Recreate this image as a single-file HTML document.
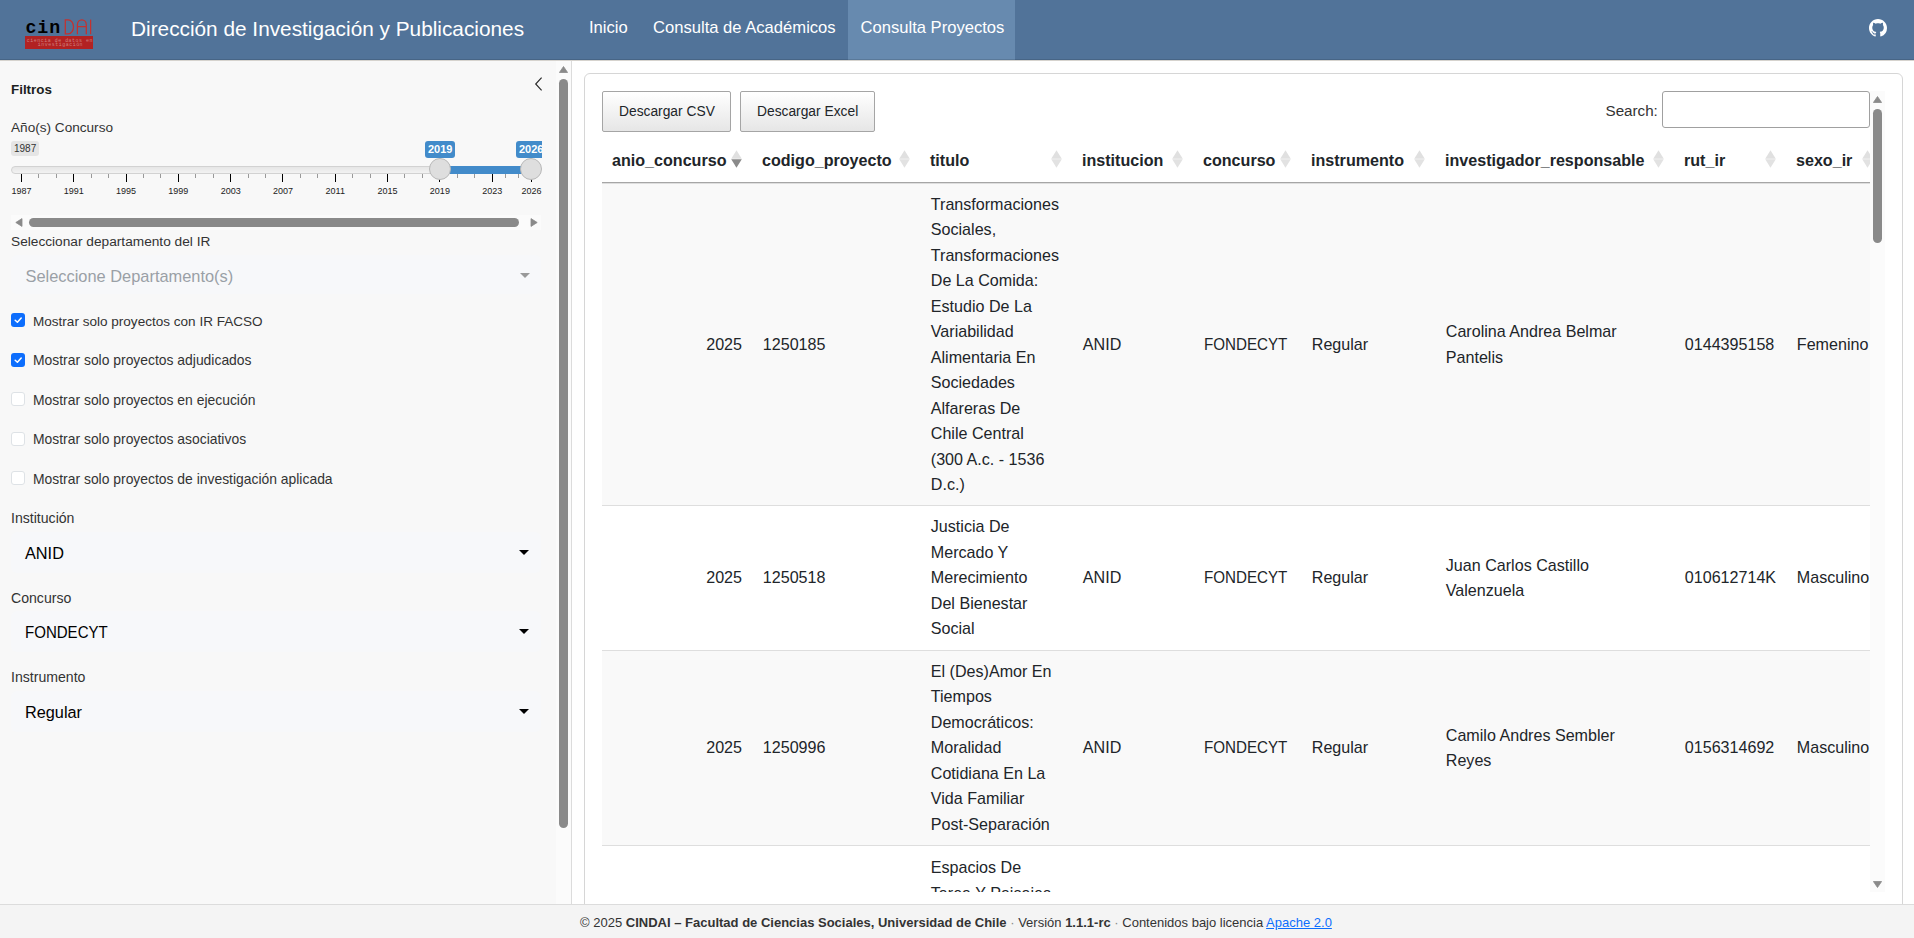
<!DOCTYPE html>
<html><head><meta charset="utf-8"><title>Consulta Proyectos</title><style>
*{box-sizing:border-box;margin:0;padding:0}
html,body{width:1914px;height:938px;overflow:hidden;background:#fff;font-family:"Liberation Sans",sans-serif;color:#212529}
.t{position:absolute;white-space:nowrap;line-height:1}
.a{position:absolute}
</style></head><body>
<div class="a" style="left:0;top:0;width:1914px;height:60px;background:#517399"></div>
<div class="a" style="left:848px;top:0;width:167px;height:60px;background:#678aaf"></div>
<div class="a" style="left:0;top:59px;width:1914px;height:1px;background:rgba(0,0,0,0.12)"></div>
<div class="a" style="left:0;top:60px;width:1914px;height:1px;background:#d6d3ce"></div>
<div class="a" style="left:25px;top:19px;width:69px;height:31px">
<div class="t" style="left:0.5px;top:0.4px;font-family:'Liberation Mono';font-weight:700;font-size:18.3px;color:#000;letter-spacing:0.9px">cin</div>
<svg class="a" style="left:38.8px;top:0px" width="30" height="16" viewBox="0 0 30 16"><g fill="none" stroke="#c5312f" stroke-width="1.25"><path d="M1.3 0.8 L1.3 14.9 L4.2 14.9 A5.3 7.05 0 0 0 4.2 0.8 Z"/><path d="M13.4 15.2 L13.4 5.8 A4.45 5 0 0 1 22.3 5.8 L22.3 15.2 M13.4 7.6 L22.3 7.6"/><path d="M26.6 0.6 L26.6 15.2"/></g></svg>
<div class="a" style="left:0;top:17px;width:68px;height:13px;background:#b22222"></div>
<div class="t" style="left:1.8px;top:19.5px;font-family:'Liberation Mono';font-size:4.9px;color:#cf8080;letter-spacing:0.55px">ciencia de datos en</div>
<div class="t" style="left:12.8px;top:24px;font-family:'Liberation Mono';font-size:4.9px;color:#cf8080;letter-spacing:0.55px">investigación</div>
</div>
<div class="t" style="left:131.00px;top:18.89px;font-size:20.8px;font-weight:400;color:#fff;">Dirección de Investigación y Publicaciones</div>
<div class="t" style="left:589.00px;top:20.35px;font-size:16.6px;font-weight:400;color:#fff;">Inicio</div>
<div class="t" style="left:653.00px;top:20.35px;font-size:16.6px;font-weight:400;color:#fff;">Consulta de Académicos</div>
<div class="t" style="left:860.50px;top:20.35px;font-size:16.6px;font-weight:400;color:#fff;">Consulta Proyectos</div>
<svg class="a" style="left:1869px;top:18.5px" width="18" height="18" viewBox="0 0 16 16"><path fill="#fff" d="M8 0C3.58 0 0 3.58 0 8c0 3.54 2.29 6.53 5.47 7.59.4.07.55-.17.55-.38 0-.19-.01-.82-.01-1.49-2.01.37-2.530-.49-2.69-.94-.09-.23-.48-.94-.82-1.13-.28-.15-.68-.52-.01-.53.63-.01 1.08.58 1.23.82.72 1.21 1.87.87 2.33.66.07-.52.28-.87.51-1.07-1.78-.2-3.64-.89-3.64-3.950 0-.87.31-1.59.82-2.15-.08-.2-.36-1.02.08-2.12 0 0 .67-.21 2.2.82.64-.18 1.32-.27 2-.27.68 0 1.36.09 2 .27 1.53-1.04 2.2-.82 2.2-.82.44 1.1.16 1.92.08 2.12.51.56.82 1.27.82 2.15 0 3.07-1.87 3.75-3.65 3.95.29.25.54.73.54 1.48 0 1.07-.01 1.93-.01 2.2 0 .21.15.46.55.38A8.013 8.013 0 0016 8c0-4.42-3.58-8-8-8z"/></svg>
<div class="a" style="left:0;top:61px;width:571px;height:877px;background:#f8f8f8"></div>
<div class="a" style="left:571px;top:61px;width:1px;height:877px;background:#dcdcdc"></div>
<div class="a" style="left:556px;top:61px;width:15px;height:877px;background:#fbfbfb"></div>
<svg class="a" style="left:559px;top:66px" width="9" height="7" viewBox="0 0 9 7"><path d="M4.5 0.5 L8.6 6.5 L0.4 6.5 Z" fill="#8a8a8a" stroke="#8a8a8a" stroke-width="0.8" stroke-linejoin="round"/></svg>
<div class="a" style="left:559px;top:79px;width:9px;height:749px;background:#8a8a8a;border-radius:4.5px"></div>
<svg class="a" style="left:533px;top:76px" width="10" height="16" viewBox="0 0 10 16"><path d="M8.6 1.6 L2.7 8 L8.6 14.4" fill="none" stroke="#2a2a2a" stroke-width="1.15"/></svg>
<div class="t" style="left:11.00px;top:82.66px;font-size:13.4px;font-weight:700;color:#1d1f21;">Filtros</div>
<div class="t" style="left:11.00px;top:120.79px;font-size:13.6px;font-weight:400;color:#333;">Año(s) Concurso</div>
<div class="a" style="left:11px;top:141px;width:28px;height:15px;background:#e5e5e5;border-radius:3px"></div>
<div class="t" style="left:14.00px;top:144.03px;font-size:10px;font-weight:400;color:#333;">1987</div>
<div class="a" style="left:11px;top:166px;width:530px;height:8px;background:linear-gradient(#e6e6e6,#f2f2f2);border:1px solid #d2d2d2;border-radius:8px"></div>
<div class="a" style="left:440px;top:166px;width:91px;height:8px;background:#428bca"></div>
<div class="a" style="left:20.90px;top:174px;width:1px;height:8px;background:#000"></div>
<div class="t" style="left:11.40px;top:187.38px;width:20px;text-align:center;font-size:9px;color:#222">1987</div>
<div class="a" style="left:73.21px;top:174px;width:1px;height:8px;background:#000"></div>
<div class="t" style="left:63.71px;top:187.38px;width:20px;text-align:center;font-size:9px;color:#222">1991</div>
<div class="a" style="left:125.52px;top:174px;width:1px;height:8px;background:#000"></div>
<div class="t" style="left:116.02px;top:187.38px;width:20px;text-align:center;font-size:9px;color:#222">1995</div>
<div class="a" style="left:177.82px;top:174px;width:1px;height:8px;background:#000"></div>
<div class="t" style="left:168.32px;top:187.38px;width:20px;text-align:center;font-size:9px;color:#222">1999</div>
<div class="a" style="left:230.13px;top:174px;width:1px;height:8px;background:#000"></div>
<div class="t" style="left:220.63px;top:187.38px;width:20px;text-align:center;font-size:9px;color:#222">2003</div>
<div class="a" style="left:282.44px;top:174px;width:1px;height:8px;background:#000"></div>
<div class="t" style="left:272.94px;top:187.38px;width:20px;text-align:center;font-size:9px;color:#222">2007</div>
<div class="a" style="left:334.75px;top:174px;width:1px;height:8px;background:#000"></div>
<div class="t" style="left:325.25px;top:187.38px;width:20px;text-align:center;font-size:9px;color:#222">2011</div>
<div class="a" style="left:387.06px;top:174px;width:1px;height:8px;background:#000"></div>
<div class="t" style="left:377.56px;top:187.38px;width:20px;text-align:center;font-size:9px;color:#222">2015</div>
<div class="a" style="left:439.36px;top:174px;width:1px;height:8px;background:#000"></div>
<div class="t" style="left:429.86px;top:187.38px;width:20px;text-align:center;font-size:9px;color:#222">2019</div>
<div class="a" style="left:491.67px;top:174px;width:1px;height:8px;background:#000"></div>
<div class="t" style="left:482.17px;top:187.38px;width:20px;text-align:center;font-size:9px;color:#222">2023</div>
<div class="a" style="left:530.90px;top:174px;width:1px;height:8px;background:#000"></div>
<div class="t" style="left:521.40px;top:187.38px;width:20px;text-align:center;font-size:9px;color:#222">2026</div>
<div class="a" style="left:38.34px;top:174px;width:1px;height:4px;background:#999"></div>
<div class="a" style="left:55.77px;top:174px;width:1px;height:4px;background:#999"></div>
<div class="a" style="left:90.64px;top:174px;width:1px;height:4px;background:#999"></div>
<div class="a" style="left:108.08px;top:174px;width:1px;height:4px;background:#999"></div>
<div class="a" style="left:142.95px;top:174px;width:1px;height:4px;background:#999"></div>
<div class="a" style="left:160.39px;top:174px;width:1px;height:4px;background:#999"></div>
<div class="a" style="left:195.26px;top:174px;width:1px;height:4px;background:#999"></div>
<div class="a" style="left:212.70px;top:174px;width:1px;height:4px;background:#999"></div>
<div class="a" style="left:247.57px;top:174px;width:1px;height:4px;background:#999"></div>
<div class="a" style="left:265.00px;top:174px;width:1px;height:4px;background:#999"></div>
<div class="a" style="left:299.88px;top:174px;width:1px;height:4px;background:#999"></div>
<div class="a" style="left:317.31px;top:174px;width:1px;height:4px;background:#999"></div>
<div class="a" style="left:352.18px;top:174px;width:1px;height:4px;background:#999"></div>
<div class="a" style="left:369.62px;top:174px;width:1px;height:4px;background:#999"></div>
<div class="a" style="left:404.49px;top:174px;width:1px;height:4px;background:#999"></div>
<div class="a" style="left:421.93px;top:174px;width:1px;height:4px;background:#999"></div>
<div class="a" style="left:456.80px;top:174px;width:1px;height:4px;background:#999"></div>
<div class="a" style="left:474.24px;top:174px;width:1px;height:4px;background:#999"></div>
<div class="a" style="left:504.75px;top:174px;width:1px;height:4px;background:#999"></div>
<div class="a" style="left:517.83px;top:174px;width:1px;height:4px;background:#999"></div>
<div class="a" style="left:429px;top:158px;width:22px;height:22px;border-radius:50%;background:#dedede;border:1px solid #b8b8b8"></div>
<div class="a" style="left:520px;top:158px;width:22px;height:22px;border-radius:50%;background:#dedede;border:1px solid #b8b8b8"></div>
<div class="a" style="left:425px;top:141px;width:30px;height:17px;background:#428bca;border-radius:3px"></div>
<div class="t" style="left:428.00px;top:144.19px;font-size:11px;font-weight:700;color:#fff;">2019</div>
<div class="a" style="left:516px;top:141px;width:26px;height:17px;background:#428bca;border-radius:3px 0 0 3px;overflow:hidden"></div>
<div class="a" style="left:516px;top:141px;width:26px;height:17px;overflow:hidden"><div class="t" style="left:3px;top:3.19px;font-size:11px;font-weight:700;color:#fff">2026</div></div>
<div class="a" style="left:11px;top:215px;width:530px;height:15px;background:#fbfbfb"></div>
<svg class="a" style="left:15px;top:218px" width="8" height="9" viewBox="0 0 8 9"><path d="M7 0.6 L7 8.4 L0.8 4.5 Z" fill="#8a8a8a" stroke="#8a8a8a" stroke-width="0.8" stroke-linejoin="round"/></svg>
<svg class="a" style="left:530px;top:218px" width="8" height="9" viewBox="0 0 8 9"><path d="M1 0.6 L1 8.4 L7.2 4.5 Z" fill="#8a8a8a" stroke="#8a8a8a" stroke-width="0.8" stroke-linejoin="round"/></svg>
<div class="a" style="left:29px;top:218px;width:490px;height:9px;background:#8a8a8a;border-radius:4.5px"></div>
<div class="t" style="left:11.00px;top:234.90px;font-size:13.7px;font-weight:400;color:#333;">Seleccionar departamento del IR</div>
<div class="a" style="left:11px;top:255px;width:530px;height:39px;background:#f7f8fa;border-radius:6px"></div>
<div class="t" style="left:25.50px;top:267.92px;font-size:16.4px;font-weight:400;color:#9aa0a6;">Seleccione Departamento(s)</div>
<svg class="a" style="left:519.5px;top:273px" width="10" height="5" viewBox="0 0 10 5"><path d="M0 0 L10 0 L5 5 Z" fill="#999"/></svg>
<div class="a" style="left:11px;top:313px;width:14px;height:14px;background:#0d6efd;border-radius:3px"></div>
<svg class="a" style="left:11px;top:313px" width="14" height="14" viewBox="0 0 14 14"><path d="M4.2 7.3 L6.4 9.3 L10.2 5.1" fill="none" stroke="#fff" stroke-width="1.55" stroke-linecap="round" stroke-linejoin="round"/></svg>
<div class="t" style="left:33.00px;top:314.83px;font-size:13.55px;font-weight:400;color:#333;">Mostrar solo proyectos con IR FACSO</div>
<div class="a" style="left:11px;top:352.6px;width:14px;height:14px;background:#0d6efd;border-radius:3px"></div>
<svg class="a" style="left:11px;top:352.6px" width="14" height="14" viewBox="0 0 14 14"><path d="M4.2 7.3 L6.4 9.3 L10.2 5.1" fill="none" stroke="#fff" stroke-width="1.55" stroke-linecap="round" stroke-linejoin="round"/></svg>
<div class="t" style="left:33.00px;top:354.13px;font-size:13.9px;font-weight:400;color:#333;">Mostrar solo proyectos adjudicados</div>
<div class="a" style="left:11px;top:392.2px;width:14px;height:14px;background:#fff;border:1px solid #dee2e6;border-radius:3px"></div>
<div class="t" style="left:33.00px;top:393.73px;font-size:13.9px;font-weight:400;color:#333;">Mostrar solo proyectos en ejecución</div>
<div class="a" style="left:11px;top:431.8px;width:14px;height:14px;background:#fff;border:1px solid #dee2e6;border-radius:3px"></div>
<div class="t" style="left:33.00px;top:433.33px;font-size:13.9px;font-weight:400;color:#333;">Mostrar solo proyectos asociativos</div>
<div class="a" style="left:11px;top:471.4px;width:14px;height:14px;background:#fff;border:1px solid #dee2e6;border-radius:3px"></div>
<div class="t" style="left:33.00px;top:472.93px;font-size:13.9px;font-weight:400;color:#333;">Mostrar solo proyectos de investigación aplicada</div>
<div class="t" style="left:11.00px;top:511.46px;font-size:14.1px;font-weight:400;color:#333;">Institución</div>
<div class="a" style="left:11px;top:532px;width:530px;height:41px;background:#f7f8fa;border-radius:6px"></div>
<div class="t" style="left:25.00px;top:545.00px;font-size:16.3px;font-weight:400;color:#000;">ANID</div>
<svg class="a" style="left:519px;top:550px" width="10" height="5" viewBox="0 0 10 5"><path d="M0 0 L10 0 L5 5 Z" fill="#000"/></svg>
<div class="t" style="left:11.00px;top:591.06px;font-size:14.1px;font-weight:400;color:#333;">Concurso</div>
<div class="a" style="left:11px;top:611px;width:530px;height:41px;background:#f7f8fa;border-radius:6px"></div>
<div class="t" style="left:25.00px;top:623.80px;font-size:16.3px;font-weight:400;color:#000;transform:scaleX(0.924);transform-origin:left;">FONDECYT</div>
<svg class="a" style="left:519px;top:629px" width="10" height="5" viewBox="0 0 10 5"><path d="M0 0 L10 0 L5 5 Z" fill="#000"/></svg>
<div class="t" style="left:11.00px;top:670.06px;font-size:14.1px;font-weight:400;color:#333;">Instrumento</div>
<div class="a" style="left:11px;top:691px;width:530px;height:41px;background:#f7f8fa;border-radius:6px"></div>
<div class="t" style="left:25.00px;top:703.70px;font-size:16.3px;font-weight:400;color:#000;">Regular</div>
<svg class="a" style="left:519px;top:709px" width="10" height="5" viewBox="0 0 10 5"><path d="M0 0 L10 0 L5 5 Z" fill="#000"/></svg>
<div class="a" style="left:584px;top:73px;width:1319px;height:900px;border:1px solid #d6d6d6;border-radius:6px;background:#fff"></div>
<div class="a" style="left:602px;top:91px;width:129px;height:41px;border:1px solid #a5a5a5;border-radius:2px;background:linear-gradient(#fff,#e6e6e6)"></div>
<div class="t" style="left:619.00px;top:105.32px;font-size:13.8px;font-weight:400;color:#212529;">Descargar CSV</div>
<div class="a" style="left:740px;top:91px;width:135px;height:41px;border:1px solid #a5a5a5;border-radius:2px;background:linear-gradient(#fff,#e6e6e6)"></div>
<div class="t" style="left:757.00px;top:105.32px;font-size:13.8px;font-weight:400;color:#212529;">Descargar Excel</div>
<div class="t" style="left:1605.50px;top:103.43px;font-size:15.2px;font-weight:400;color:#333;">Search:</div>
<div class="a" style="left:1662px;top:91px;width:208px;height:37px;border:1px solid #a0a0a0;border-radius:3px;background:#fff"></div>
<div class="a" style="left:602px;top:91px;width:1268px;height:801px;overflow:hidden">
<div class="t" style="left:10.00px;top:60.77px;font-size:16.1px;font-weight:700;color:#212529;">anio_concurso</div>
<svg class="a" style="left:129px;top:58.80000000000001px" width="11" height="18" viewBox="0 0 11 18"><path d="M5.5 0.3 L10.8 8.7 L0.2 8.7 Z" fill="#e0e0e0"/><path d="M0.2 9.2 L10.8 9.2 L5.5 17.7 Z" fill="#8a8a8a"/></svg>
<div class="t" style="left:160.00px;top:60.77px;font-size:16.1px;font-weight:700;color:#212529;">codigo_proyecto</div>
<svg class="a" style="left:297px;top:58.80000000000001px" width="11" height="18" viewBox="0 0 11 18"><path d="M5.5 0.3 L10.8 8.7 L0.2 8.7 Z" fill="#e0e0e0"/><path d="M0.2 9.2 L10.8 9.2 L5.5 17.7 Z" fill="#e2e2e2"/></svg>
<div class="t" style="left:328.00px;top:60.77px;font-size:16.1px;font-weight:700;color:#212529;">titulo</div>
<svg class="a" style="left:449px;top:58.80000000000001px" width="11" height="18" viewBox="0 0 11 18"><path d="M5.5 0.3 L10.8 8.7 L0.2 8.7 Z" fill="#e0e0e0"/><path d="M0.2 9.2 L10.8 9.2 L5.5 17.7 Z" fill="#e2e2e2"/></svg>
<div class="t" style="left:480.00px;top:60.77px;font-size:16.1px;font-weight:700;color:#212529;">institucion</div>
<svg class="a" style="left:570px;top:58.80000000000001px" width="11" height="18" viewBox="0 0 11 18"><path d="M5.5 0.3 L10.8 8.7 L0.2 8.7 Z" fill="#e0e0e0"/><path d="M0.2 9.2 L10.8 9.2 L5.5 17.7 Z" fill="#e2e2e2"/></svg>
<div class="t" style="left:601.00px;top:60.77px;font-size:16.1px;font-weight:700;color:#212529;">concurso</div>
<svg class="a" style="left:678px;top:58.80000000000001px" width="11" height="18" viewBox="0 0 11 18"><path d="M5.5 0.3 L10.8 8.7 L0.2 8.7 Z" fill="#e0e0e0"/><path d="M0.2 9.2 L10.8 9.2 L5.5 17.7 Z" fill="#e2e2e2"/></svg>
<div class="t" style="left:709.00px;top:60.77px;font-size:16.1px;font-weight:700;color:#212529;">instrumento</div>
<svg class="a" style="left:812px;top:58.80000000000001px" width="11" height="18" viewBox="0 0 11 18"><path d="M5.5 0.3 L10.8 8.7 L0.2 8.7 Z" fill="#e0e0e0"/><path d="M0.2 9.2 L10.8 9.2 L5.5 17.7 Z" fill="#e2e2e2"/></svg>
<div class="t" style="left:843.00px;top:60.77px;font-size:16.1px;font-weight:700;color:#212529;">investigador_responsable</div>
<svg class="a" style="left:1051px;top:58.80000000000001px" width="11" height="18" viewBox="0 0 11 18"><path d="M5.5 0.3 L10.8 8.7 L0.2 8.7 Z" fill="#e0e0e0"/><path d="M0.2 9.2 L10.8 9.2 L5.5 17.7 Z" fill="#e2e2e2"/></svg>
<div class="t" style="left:1082.00px;top:60.77px;font-size:16.1px;font-weight:700;color:#212529;">rut_ir</div>
<svg class="a" style="left:1163px;top:58.80000000000001px" width="11" height="18" viewBox="0 0 11 18"><path d="M5.5 0.3 L10.8 8.7 L0.2 8.7 Z" fill="#e0e0e0"/><path d="M0.2 9.2 L10.8 9.2 L5.5 17.7 Z" fill="#e2e2e2"/></svg>
<div class="t" style="left:1194.00px;top:60.77px;font-size:16.1px;font-weight:700;color:#212529;">sexo_ir</div>
<svg class="a" style="left:1260px;top:58.80000000000001px" width="11" height="18" viewBox="0 0 11 18"><path d="M5.5 0.3 L10.8 8.7 L0.2 8.7 Z" fill="#e0e0e0"/><path d="M0.2 9.2 L10.8 9.2 L5.5 17.7 Z" fill="#e2e2e2"/></svg>
<div class="a" style="left:0;top:91px;width:1294px;height:1px;background:#a6a6a6"></div>
<div class="a" style="left:0;top:92px;width:1294px;height:322px;background:#f9f9f9;border-top:1px solid #dedede"></div>
<div class="t" style="left:0px;width:140px;text-align:right;top:244.87px;font-size:16.1px;color:#212529">2025</div>
<div class="t" style="left:160.80px;top:244.87px;font-size:16.1px;font-weight:400;color:#212529;">1250185</div>
<div class="t" style="left:328.80px;top:104.62px;font-size:16.1px;font-weight:400;color:#212529;">Transformaciones</div>
<div class="t" style="left:328.80px;top:130.12px;font-size:16.1px;font-weight:400;color:#212529;">Sociales,</div>
<div class="t" style="left:328.80px;top:155.62px;font-size:16.1px;font-weight:400;color:#212529;">Transformaciones</div>
<div class="t" style="left:328.80px;top:181.12px;font-size:16.1px;font-weight:400;color:#212529;">De La Comida:</div>
<div class="t" style="left:328.80px;top:206.62px;font-size:16.1px;font-weight:400;color:#212529;">Estudio De La</div>
<div class="t" style="left:328.80px;top:232.12px;font-size:16.1px;font-weight:400;color:#212529;">Variabilidad</div>
<div class="t" style="left:328.80px;top:257.62px;font-size:16.1px;font-weight:400;color:#212529;">Alimentaria En</div>
<div class="t" style="left:328.80px;top:283.12px;font-size:16.1px;font-weight:400;color:#212529;">Sociedades</div>
<div class="t" style="left:328.80px;top:308.62px;font-size:16.1px;font-weight:400;color:#212529;">Alfareras De</div>
<div class="t" style="left:328.80px;top:334.12px;font-size:16.1px;font-weight:400;color:#212529;">Chile Central</div>
<div class="t" style="left:328.80px;top:359.62px;font-size:16.1px;font-weight:400;color:#212529;">(300 A.c. - 1536</div>
<div class="t" style="left:328.80px;top:385.12px;font-size:16.1px;font-weight:400;color:#212529;">D.c.)</div>
<div class="t" style="left:480.80px;top:244.87px;font-size:16.1px;font-weight:400;color:#212529;">ANID</div>
<div class="t" style="left:601.80px;top:244.87px;font-size:16.1px;font-weight:400;color:#212529;transform:scaleX(0.942);transform-origin:left;">FONDECYT</div>
<div class="t" style="left:709.80px;top:244.87px;font-size:16.1px;font-weight:400;color:#212529;">Regular</div>
<div class="t" style="left:843.80px;top:232.12px;font-size:16.1px;font-weight:400;color:#212529;">Carolina Andrea Belmar</div>
<div class="t" style="left:843.80px;top:257.62px;font-size:16.1px;font-weight:400;color:#212529;">Pantelis</div>
<div class="t" style="left:1082.80px;top:244.87px;font-size:16.1px;font-weight:400;color:#212529;">0144395158</div>
<div class="t" style="left:1194.80px;top:244.87px;font-size:16.1px;font-weight:400;color:#212529;">Femenino</div>
<div class="a" style="left:0;top:414px;width:1294px;height:145px;background:#fff;border-top:1px solid #dedede"></div>
<div class="t" style="left:0px;width:140px;text-align:right;top:478.37px;font-size:16.1px;color:#212529">2025</div>
<div class="t" style="left:160.80px;top:478.37px;font-size:16.1px;font-weight:400;color:#212529;">1250518</div>
<div class="t" style="left:328.80px;top:427.37px;font-size:16.1px;font-weight:400;color:#212529;">Justicia De</div>
<div class="t" style="left:328.80px;top:452.87px;font-size:16.1px;font-weight:400;color:#212529;">Mercado Y</div>
<div class="t" style="left:328.80px;top:478.37px;font-size:16.1px;font-weight:400;color:#212529;">Merecimiento</div>
<div class="t" style="left:328.80px;top:503.87px;font-size:16.1px;font-weight:400;color:#212529;">Del Bienestar</div>
<div class="t" style="left:328.80px;top:529.37px;font-size:16.1px;font-weight:400;color:#212529;">Social</div>
<div class="t" style="left:480.80px;top:478.37px;font-size:16.1px;font-weight:400;color:#212529;">ANID</div>
<div class="t" style="left:601.80px;top:478.37px;font-size:16.1px;font-weight:400;color:#212529;transform:scaleX(0.942);transform-origin:left;">FONDECYT</div>
<div class="t" style="left:709.80px;top:478.37px;font-size:16.1px;font-weight:400;color:#212529;">Regular</div>
<div class="t" style="left:843.80px;top:465.62px;font-size:16.1px;font-weight:400;color:#212529;">Juan Carlos Castillo</div>
<div class="t" style="left:843.80px;top:491.12px;font-size:16.1px;font-weight:400;color:#212529;">Valenzuela</div>
<div class="t" style="left:1082.80px;top:478.37px;font-size:16.1px;font-weight:400;color:#212529;">010612714K</div>
<div class="t" style="left:1194.80px;top:478.37px;font-size:16.1px;font-weight:400;color:#212529;">Masculino</div>
<div class="a" style="left:0;top:559px;width:1294px;height:195px;background:#f9f9f9;border-top:1px solid #dedede"></div>
<div class="t" style="left:0px;width:140px;text-align:right;top:648.37px;font-size:16.1px;color:#212529">2025</div>
<div class="t" style="left:160.80px;top:648.37px;font-size:16.1px;font-weight:400;color:#212529;">1250996</div>
<div class="t" style="left:328.80px;top:571.87px;font-size:16.1px;font-weight:400;color:#212529;">El (Des)Amor En</div>
<div class="t" style="left:328.80px;top:597.37px;font-size:16.1px;font-weight:400;color:#212529;">Tiempos</div>
<div class="t" style="left:328.80px;top:622.87px;font-size:16.1px;font-weight:400;color:#212529;">Democráticos:</div>
<div class="t" style="left:328.80px;top:648.37px;font-size:16.1px;font-weight:400;color:#212529;">Moralidad</div>
<div class="t" style="left:328.80px;top:673.87px;font-size:16.1px;font-weight:400;color:#212529;">Cotidiana En La</div>
<div class="t" style="left:328.80px;top:699.37px;font-size:16.1px;font-weight:400;color:#212529;">Vida Familiar</div>
<div class="t" style="left:328.80px;top:724.87px;font-size:16.1px;font-weight:400;color:#212529;">Post-Separación</div>
<div class="t" style="left:480.80px;top:648.37px;font-size:16.1px;font-weight:400;color:#212529;">ANID</div>
<div class="t" style="left:601.80px;top:648.37px;font-size:16.1px;font-weight:400;color:#212529;transform:scaleX(0.942);transform-origin:left;">FONDECYT</div>
<div class="t" style="left:709.80px;top:648.37px;font-size:16.1px;font-weight:400;color:#212529;">Regular</div>
<div class="t" style="left:843.80px;top:635.62px;font-size:16.1px;font-weight:400;color:#212529;">Camilo Andres Sembler</div>
<div class="t" style="left:843.80px;top:661.12px;font-size:16.1px;font-weight:400;color:#212529;">Reyes</div>
<div class="t" style="left:1082.80px;top:648.37px;font-size:16.1px;font-weight:400;color:#212529;">0156314692</div>
<div class="t" style="left:1194.80px;top:648.37px;font-size:16.1px;font-weight:400;color:#212529;">Masculino</div>
<div class="a" style="left:0;top:754px;width:1294px;height:355px;background:#fff;border-top:1px solid #dedede"></div>
<div class="t" style="left:328.80px;top:768.37px;font-size:16.1px;font-weight:400;color:#212529;">Espacios De</div>
<div class="t" style="left:328.80px;top:793.87px;font-size:16.1px;font-weight:400;color:#212529;">Tarea Y Paisajes</div>
<div class="t" style="left:328.80px;top:819.37px;font-size:16.1px;font-weight:400;color:#212529;">De Cuidado</div>
<div class="t" style="left:328.80px;top:844.87px;font-size:16.1px;font-weight:400;color:#212529;">En Chile</div>
<div class="t" style="left:328.80px;top:870.37px;font-size:16.1px;font-weight:400;color:#212529;">Contemporáneo</div>
<div class="t" style="left:328.80px;top:895.87px;font-size:16.1px;font-weight:400;color:#212529;">x</div>
<div class="t" style="left:328.80px;top:921.37px;font-size:16.1px;font-weight:400;color:#212529;">x</div>
<div class="t" style="left:328.80px;top:946.87px;font-size:16.1px;font-weight:400;color:#212529;">x</div>
<div class="t" style="left:328.80px;top:972.37px;font-size:16.1px;font-weight:400;color:#212529;">x</div>
<div class="t" style="left:328.80px;top:997.87px;font-size:16.1px;font-weight:400;color:#212529;">x</div>
<div class="t" style="left:328.80px;top:1023.37px;font-size:16.1px;font-weight:400;color:#212529;">x</div>
<div class="t" style="left:328.80px;top:1048.87px;font-size:16.1px;font-weight:400;color:#212529;">x</div>
<div class="t" style="left:328.80px;top:1074.37px;font-size:16.1px;font-weight:400;color:#212529;">x</div>
</div>
<div class="a" style="left:1870px;top:91px;width:15px;height:801px;background:#fbfbfb"></div>
<svg class="a" style="left:1873px;top:96px" width="9" height="7" viewBox="0 0 9 7"><path d="M4.5 0.5 L8.6 6.5 L0.4 6.5 Z" fill="#8a8a8a" stroke="#8a8a8a" stroke-width="0.8" stroke-linejoin="round"/></svg>
<div class="a" style="left:1873px;top:109px;width:9px;height:134px;background:#8a8a8a;border-radius:4.5px"></div>
<svg class="a" style="left:1873px;top:881px" width="9" height="7" viewBox="0 0 9 7"><path d="M0.4 0.5 L8.6 0.5 L4.5 6.5 Z" fill="#8a8a8a" stroke="#8a8a8a" stroke-width="0.8" stroke-linejoin="round"/></svg>
<div class="a" style="left:0;top:904px;width:1914px;height:34px;background:#f4f4f4;border-top:1px solid #dcdcdc"></div>
<div class="t" style="left:-1px;width:1914px;text-align:center;top:916.00px;font-size:13px;color:#333">© 2025 <b>CINDAI – Facultad de Ciencias Sociales, Universidad de Chile</b> <span style="color:#888">·</span> Versión <b>1.1.1-rc</b> <span style="color:#888">·</span> Contenidos bajo licencia <span style="color:#0d6efd;text-decoration:underline">Apache 2.0</span></div>
</body></html>
